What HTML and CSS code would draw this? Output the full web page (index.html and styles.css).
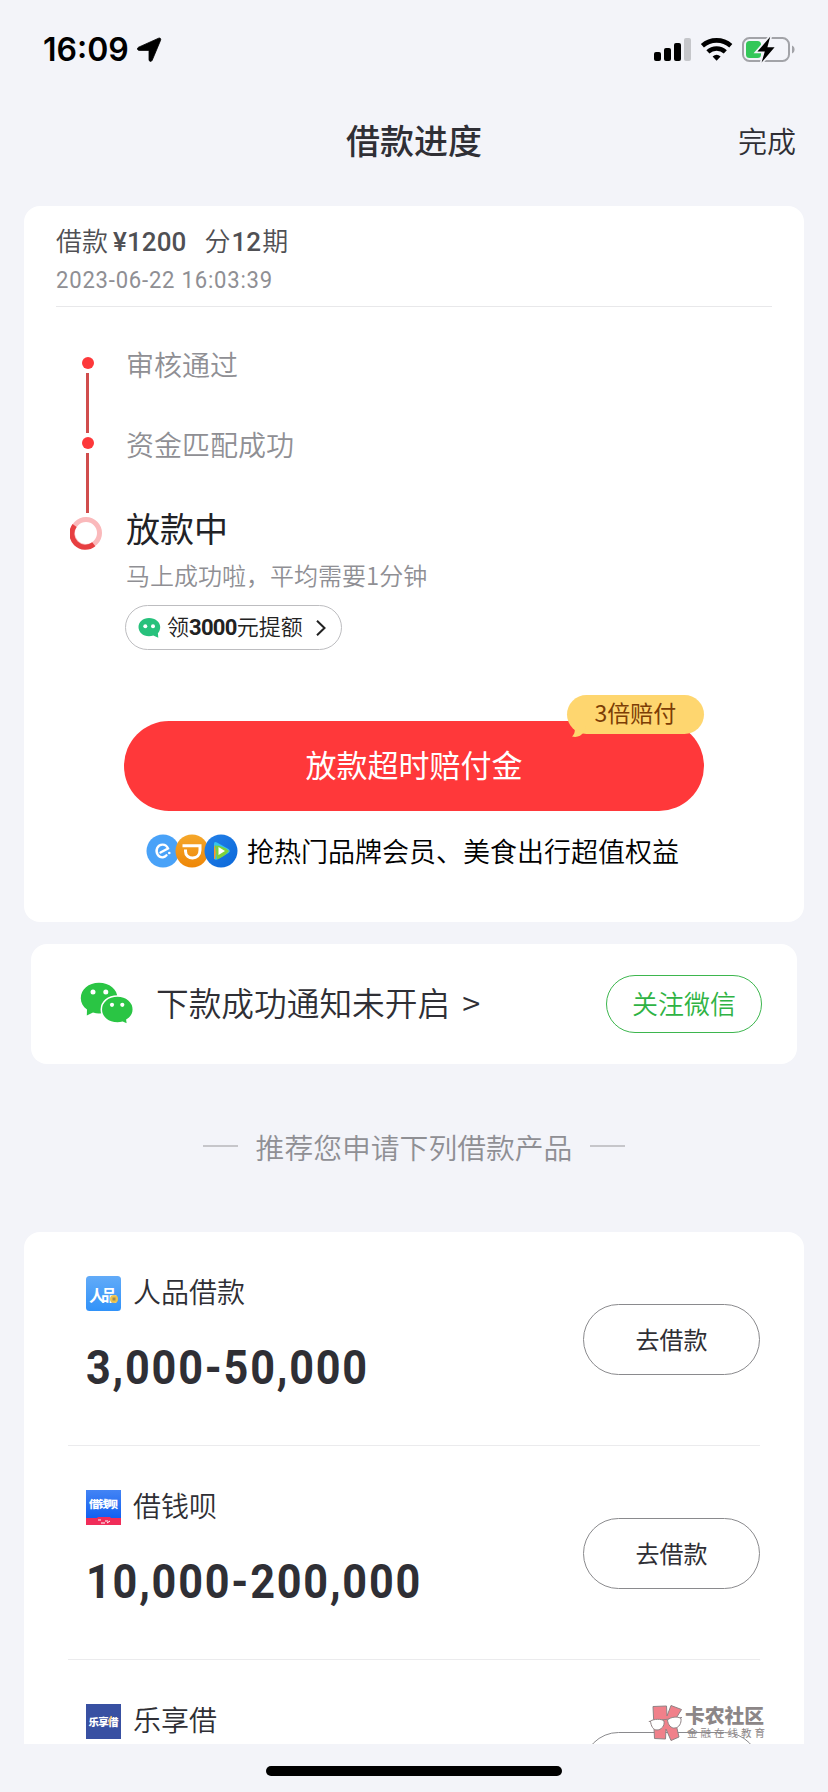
FILE: index.html
```html
<!DOCTYPE html>
<html lang="zh-CN">
<head>
<meta charset="utf-8">
<title>借款进度</title>
<link rel="stylesheet" href="styles.css">
</head>
<body>
<div class="screen">
  <div class="statusbar">
    <div class="clock">16:09</div>
    <svg class="loc" width="26" height="26" viewBox="0 0 26 26"><path d="M22.6 1.2c1.500-.6 2.600.5 2 2L16.200 23.300c-.7 1.700-3.200 1.400-3.200-.6V14.200c0-.5-.3-.8-.8-.8H3.200c-2 0-2.300-2.500-.6-3.200z" fill="#000" stroke="#000" stroke-width=".8"/></svg>
    <div class="spacer"></div>
    <svg class="indicators" width="144" height="28" viewBox="0 0 144 28">
      <rect x="1" y="16" width="7" height="9" rx="2"/><rect x="11" y="12" width="7" height="13" rx="2"/><rect x="21" y="7" width="7" height="18" rx="2"/><rect x="31" y="2" width="7" height="23" rx="2" fill="#c5c6ca"/>
      <g fill="none" stroke="#000" stroke-width="4.600"><path d="M49.400 9.700a21.500 21.500 0 0 1 28.400 0"/><path d="M54.900 15.900a13 13 0 0 1 17.400 0"/></g>
      <path d="M59.600 20.400a6.500 6.500 0 0 1 8 0L63.600 24.700z"/>
      <rect x="90" y="2.100" width="46" height="22.800" rx="6.500" fill="none" stroke="#a2a3a8" stroke-width="2"/>
      <path d="M139 9.500c3.400 1.300 3.400 6.700 0 8z" fill="#a2a3a8"/>
      <rect x="93" y="5" width="15" height="17" rx="3.500" fill="#34c759"/>
      <path d="M117.200.8L104.400 15.600h7.400L108.600 26.400 121.600 11.300h-7.200z" stroke="#f3f4f9" stroke-width="3.500"/><path d="M117.200.8L104.400 15.600h7.400L108.600 26.400 121.600 11.300h-7.200z"/>
    </svg>
  </div>

  <div class="navbar"><span></span><h1 class="nav-title">借款进度</h1><span class="nav-done">完成</span></div>

  <main class="content">
    <section class="card progress">
      <header class="loan">
        <div class="loan-line">借款<span class="din amount">¥1200</span><span class="term">分<span class="din">12</span>期</span></div>
        <div class="loan-date">2023-06-22 16:03:39</div>
      </header>
      <div class="steps">
        <svg class="rail" width="34" height="196" viewBox="0 0 34 196">
          <g fill="#fd383a"><circle cx="18" cy="6" r="6"/><circle cx="18" cy="86" r="6"/></g>
          <path d="M17.500 16v60M17.500 96v60" stroke="#d04d4d" stroke-width="3"/>
          <circle cx="16" cy="176" r="13.500" fill="none" stroke="#fab9bb" stroke-width="5"/>
          <path d="M4.600 168.500A13.500 13.500 0 0 0 23.800 187.200" fill="none" stroke="#e73f41" stroke-width="5"/>
        </svg>
        <div class="step-list">
          <div class="step">审核通过</div>
          <div class="step">资金匹配成功</div>
          <div class="step-now">放款中</div>
          <div class="step-note">马上成功啦，平均需要1分钟</div>
          <a class="raise">
            <svg width="23" height="22" viewBox="0 0 23 22"><path d="M11 1C4.800 1 .5 5 .5 10S4.800 19.300 11 19.300c1.500 0 3-.2 4.300-.7l5 2.200-.4-4.500c1.500-1.600 2.300-3.700 2.300-6.300C22.200 5 17.400 1 11 1z" fill="#27c17c"/><circle cx="7.300" cy="9.300" r="2" fill="#fff"/><circle cx="15" cy="9.300" r="2" fill="#fff"/></svg>
            <span class="raise-text">领<b>3000</b>元提额</span>
            <svg width="12" height="18" viewBox="0 0 12 18"><path d="M2 1.800L9.500 9 2 16.200" fill="none" stroke="#222" stroke-width="2"/></svg>
          </a>
        </div>
      </div>
      <div class="cta">放款超时赔付金
        <div class="badge">3倍赔付<svg class="tail" width="14" height="12" viewBox="0 0 14 12"><path d="M2 0C3.500 4 3 8 0 10.500 5 11.800 9 10 12 6L14 0z" fill="#fed66f"/></svg></div>
      </div>
      <div class="perks">
        <svg width="92" height="34" viewBox="0 0 92 34">
          <defs>
            <linearGradient id="o" x2="0" y2="1"><stop stop-color="#f5a72a"/><stop offset="1" stop-color="#ee8708"/></linearGradient>
            <linearGradient id="b" x2="1" y2="1"><stop stop-color="#2380e8"/><stop offset="1" stop-color="#0b68d9"/></linearGradient>
          </defs>
          <circle cx="17" cy="17" r="16.500" fill="#49a2f8"/>
          <path d="M14.500 18.500L22 14.500C20 9.500 13.500 9.300 11.200 14 9.200 19 12.500 23.800 17 23.300c1.500-.2 2.500-.9 3.500-2" fill="none" stroke="#fff" stroke-width="2.400" stroke-linecap="round"/><circle cx="23.300" cy="19" r="1.300" fill="#fff"/>
          <circle cx="46" cy="17" r="16.500" fill="url(#o)"/>
          <path d="M36.500 11.800H54V16c0 10.500-14.500 10.500-14.500 1.200V15.500" fill="none" stroke="#fff" stroke-width="3"/>
          <circle cx="75" cy="17" r="16.500" fill="url(#b)"/>
          <path d="M68 10q0-3 3-1.500L82.500 15q2.500 2 0 4L71 25.500q-3 1-3-1.500z" fill="#35c2ee"/><path d="M69 11.500q8 0 14 5.500-5 6-12 8.500z" fill="#7ed23c"/><path d="M68 11q3 6 1 14h-1z" fill="#fd9828"/><path d="M72.500 13l6.500 4-6.500 4z" fill="#fff"/>
        </svg>
        <span>抢热门品牌会员、美食出行超值权益</span>
      </div>
    </section>

    <section class="card wechat">
      <svg width="54" height="44" viewBox="0 0 54 44">
        <path d="M19 .8C8.500 .8.800 7.500.800 16.200c0 4.600 2.200 8.500 6.200 11.300L6.800 33.500 13 30.500c2 .6 4 .9 6 .9 10 0 18.500-6.600 18.500-15.200C37.500 7.500 29.500.800 19 .8z" fill="#2ac544"/>
        <path d="M37.500 14C28 14 21.300 20 21.300 27.500S28 41 37.500 41c2 0 3.600-.3 5.200-.8L47.500 42.500 46.900 38c4-2.500 6.400-6.100 6.400-10.500C53.300 20 46.500 14 37.500 14z" fill="#2ac544" stroke="#fff" stroke-width="1.500"/>
        <g fill="#fff"><circle cx="13" cy="10" r="2.500"/><circle cx="25.800" cy="10" r="2.500"/><circle cx="32" cy="22.800" r="2.100"/><circle cx="42.300" cy="22.800" r="2.100"/></g>
      </svg>
      <span class="wechat-text">下款成功通知未开启<span class="more">&gt;</span></span>
      <a class="follow">关注微信</a>
    </section>

    <div class="divider-title"><i></i><span>推荐您申请下列借款产品</span><i></i></div>

    <section class="card products">
      <article class="product">
        <div class="info">
          <div class="brand">
            <svg width="35" height="35" viewBox="0 0 35 35"><defs><linearGradient id="p" x2="0" y2="1"><stop stop-color="#62abf8"/><stop offset="1" stop-color="#3192f9"/></linearGradient></defs><rect width="35" height="35" rx="3.500" fill="url(#p)"/><text x="3" y="25" class="logo-lg" textLength="28">人品</text><circle cx="28" cy="23" r="4" fill="#eec34d"/><rect x="26.500" y="21.500" width="3" height="3" fill="#a08b50"/></svg>
            <span>人品借款</span>
          </div>
          <div class="range">3,000-50,000</div>
        </div>
        <a class="go">去借款</a>
      </article>
      <article class="product">
        <div class="info">
          <div class="brand">
            <svg width="35" height="35" viewBox="0 0 35 35"><defs><linearGradient id="q" x2="0" y2="1"><stop stop-color="#4384f5"/><stop offset=".8" stop-color="#1260f0"/></linearGradient></defs><rect width="35" height="35" fill="url(#q)"/><path d="M0 28h11l1-1h12l1 1h10v7H0z" fill="#f02d59"/><text x="3" y="17.500" class="logo-md" textLength="29">借钱呗</text><path d="M12 30h3m0 3h4m0-2h3m-1 2l3-2" stroke="#fff" fill="none"/></svg>
            <span>借钱呗</span>
          </div>
          <div class="range">10,000-200,000</div>
        </div>
        <a class="go">去借款</a>
      </article>
      <article class="product">
        <div class="info">
          <div class="brand">
            <svg width="35" height="35" viewBox="0 0 35 35"><rect width="35" height="35" fill="#3850a2"/><text x="2.500" y="22" class="logo-md" textLength="30">乐享借</text><path d="M25.500 12l-2 4v5" stroke="#efc06a" stroke-width="1.500" fill="none"/></svg>
            <span>乐享借</span>
          </div>
        </div>
        <a class="go"></a>
      </article>
    </section>
  </main>

  <footer class="home"><div class="home-bar"></div></footer>

  <div class="mark">
    <svg width="35" height="36" viewBox="0 0 35 36"><g fill="#f0808a" stroke="#8f8385" stroke-width="1"><path d="M5 1.500L18.500 1l.5 10 4-10.500 10.500 4L27 15l4 17-8 3.500L18 24l-.5 10L6.500 33.500z"/></g><path d="M.8 16.500L34 12.500" stroke="#8f8385" stroke-width="1"/><path d="M2.500 16c3-2 11-2.500 13.500 0 1 5-3 9-7 9s-6-4-6.500-9zM19.500 15c3-3 10-4 13.500-1.500.5 5-2 9-6 9.500s-7-3-7.500-8z" fill="#fff" stroke="#8f8385" stroke-width="1"/></svg>
    <div><div class="mark-name">卡农社区</div><div class="mark-sub">金融在线教育</div></div>
  </div>
</div>
</body>
</html>
```
FILE: styles.css
```css
* { box-sizing: border-box; }
body {
  margin: 0;
  background: #f3f4f9;
  font-family: "Noto Sans CJK SC", sans-serif;
  font-weight: 350;
  color: #2f2f35;
}
.screen {
  position: relative;
  display: flex;
  flex-direction: column;
  width: 828px;
  height: 1792px;
  overflow: hidden;
  white-space: nowrap;
}
svg { display: block; flex: none; }

/* status bar */
.statusbar { display: flex; height: 96px; padding: 36px 32px 0 43px; }
.clock { width: 93px; font: 600 32px/28px Inter, sans-serif; color: #000; }
.loc { margin-top: 1px; }
.spacer { flex: 1; }
.indicators { margin-right: -1px; }

/* navigation */
.navbar { display: grid; grid-template-columns: 1fr auto 1fr; height: 110px; padding: 20px 32px 0; line-height: 48px; }
.nav-title { margin: 0; font-size: 34px; font-weight: 500; line-height: 48px; }
.nav-done { text-align: right; font-size: 29px; }

.content { display: flex; flex-direction: column; height: 1538px; overflow: hidden; }
.card { flex: none; margin: 0 24px; background: #fff; border-radius: 16px; }

/* loan progress */
.progress { height: 716px; padding: 0 32px; }
.loan { height: 101px; border-bottom: 1px solid #e8e8ea; padding-top: 17px; }
.loan-line { display: flex; font-size: 26px; line-height: 34px; color: #505054; }
.din { font-family: Roboto, sans-serif; font-weight: 500; letter-spacing: 0.1px; }
.amount { margin-left: 5px; line-height: 38px; }
.term { display: flex; margin-left: 18px; }
.term .din { line-height: 38px; margin: 0 1px; }
.loan-date { width: 240px; margin-top: -1px; font: 400 24px/40px Roboto, sans-serif; color: #8f8f94; letter-spacing: 0.85px; transform: scaleX(0.92); transform-origin: left; }
.steps { display: flex; height: 414px; padding: 50px 0 0 14px; }
.rail { margin-right: 22px; }
.step { height: 80px; margin-top: -11px; margin-bottom: 11px; font-size: 28px; line-height: 36px; color: #8f8f94; }
.step-now { margin-top: -13px; font-size: 34px; line-height: 48px; font-weight: 400; color: #222226; }
.step-note { margin-top: 5px; font-size: 24px; line-height: 36px; color: #8f8f94; }
.raise { display: flex; align-items: center; width: 217px; height: 45px; margin: 12px 0 0 -1px; padding-left: 12px; border: 1px solid #bdbdc0; border-radius: 23px; font-size: 22px; color: #222; }
.raise-text { width: 148px; margin-left: 6px; line-height: 40px; margin-top: -3px; }
.raise b { font-family: Roboto, sans-serif; font-weight: 700; letter-spacing: -0.7px; }

.cta { position: relative; width: 580px; height: 90px; margin-left: 68px; border-radius: 45px; background: #ff383a; color: #fff; text-align: center; font-size: 31px; font-weight: 400; line-height: 86px; }
.badge { position: absolute; top: -26px; right: 0; width: 137px; height: 39px; border-radius: 20px; background: #fed66f; color: #7c3d05; font-size: 23px; font-weight: 400; line-height: 35px; }
.tail { position: absolute; left: 5px; top: 31px; }
.perks { display: flex; margin: 23px 0 0 90px; color: #000; font-size: 27px; line-height: 34px; }
.perks span { margin-left: 9px; }

/* notification */
.wechat { display: flex; align-items: center; height: 120px; margin: 22px 31px 0; padding: 0 35px 0 49px; }
.wechat-text { flex: 1; margin: -4px 0 0 22px; font-size: 32.7px; line-height: 48px; }
.more { margin-left: 12px; }
.follow { width: 156px; height: 58px; border: 1px solid #3db64e; border-radius: 29px; color: #2fb344; font-size: 26px; line-height: 53px; text-align: center; }

.divider-title { display: flex; flex: none; justify-content: center; align-items: center; height: 168px; gap: 18px; color: #8f8f94; font-size: 28.8px; }
.divider-title i { width: 35px; height: 2px; background: #c6c6ca; margin-top: -4px; }
.divider-title span { margin-top: -3px; }

/* products */
.products { padding: 0 44px; }
.product { display: flex; justify-content: space-between; height: 214px; padding-left: 18px; border-bottom: 1px solid #ebebed; }
.info { padding-top: 44px; }
.brand { display: flex; height: 35px; gap: 12px; font-size: 28px; line-height: 30px; }
.range { margin-top: 33px; font: 700 48px/48px Roboto, sans-serif; letter-spacing: 2px; transform: scaleX(0.9); transform-origin: left; }
.go { width: 177px; height: 71px; margin-top: 72px; border: 1px solid #8a8a8d; border-radius: 36px; font-size: 24px; font-weight: 400; line-height: 67px; text-align: center; }
.logo-lg { font-size: 16px; font-weight: 700; fill: #fff; }
.logo-md { font-size: 10.5px; font-weight: 900; fill: #fff; }

.home { height: 48px; padding-top: 22px; }
.home-bar { width: 296px; height: 10px; margin: 0 auto; border-radius: 5px; background: #000; }

/* community stamp laid over the page */
.mark { position: absolute; left: 648px; top: 1705px; display: flex; gap: 2px; color: #8c8687; }
.mark-name { font-size: 19.8px; font-weight: 900; line-height: 20px; }
.mark-sub { margin: 2px 0 0 2px; font-size: 10.5px; font-weight: 400; line-height: 12px; letter-spacing: 3px; }
```
